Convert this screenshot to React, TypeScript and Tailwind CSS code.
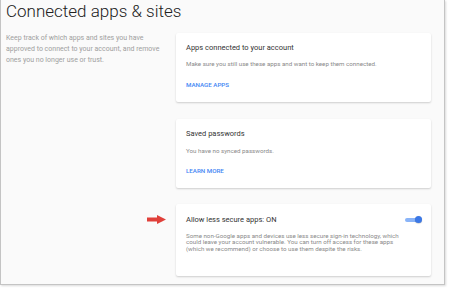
function Card({ children, className = '' }: { children: React.ReactNode; className?: string }) {
    return (
        <div className={`bg-white rounded-[2px] shadow-[0_1px_2px_rgba(0,0,0,0.18)] ${className}`}>
            {children}
        </div>
    )
}

function Arrow() {
    return (
        <svg width="19" height="9" viewBox="0 0 19 9" className="absolute left-[-29px] top-[11px]">
            <path d="M0 2.5 H10 V0 L19 4.5 L10 9 V6.5 H0 Z" fill="#e0403a" />
        </svg>
    )
}

export default function App() {
    return (
        <div className="w-[450px] h-[290px] bg-white overflow-hidden" style={{ fontFamily: 'Roboto, "Liberation Sans", sans-serif' }}>
            <div className="w-[445px] h-[285px] bg-[#fafafa] border-l border-r border-b border-[#c4c4c4] shadow-[1px_1px_2px_rgba(0,0,0,0.15)]">
                <h1 className="pl-[5px] pt-[1px] text-[17px] leading-[20px] font-light text-[#212121]">
                    Connected apps &amp; sites
                </h1>
                <div className="flex">
                    <div className="w-[175px] pl-[5px] pt-[12px] pr-[12px]">
                        <p className="text-[7px] leading-[11px] text-[#a0a0a0]">
                            Keep track of which apps and sites you have approved to connect to your account, and remove ones you no longer use or trust.
                        </p>
                    </div>
                    <div className="w-[255px] flex flex-col gap-[17px] pt-[12px]">
                        <Card className="h-[69px] px-[10px] pt-[10px]">
                            <h3 className="text-[7.5px] leading-[9px] text-[#333]">Apps connected to your account</h3>
                            <p className="mt-[8px] text-[6.2px] leading-[9px] text-[#8a8a8a]">Make sure you still use these apps and want to keep them connected.</p>
                            <a className="block mt-[12px] text-[6.2px] leading-[9px] font-medium text-[#4285f4]">MANAGE APPS</a>
                        </Card>
                        <Card className="h-[69px] px-[10px] pt-[10px]">
                            <h3 className="text-[7.5px] leading-[9px] text-[#333]">Saved passwords</h3>
                            <p className="mt-[9px] text-[6.2px] leading-[9px] text-[#8a8a8a]">You have no synced passwords.</p>
                            <a className="block mt-[11px] text-[6.2px] leading-[9px] font-medium text-[#4285f4]">LEARN MORE</a>
                        </Card>
                        <Card className="relative h-[72px] px-[10px] pt-[11px] -mt-[1px]">
                            <Arrow />
                            <div className="flex items-center justify-between">
                                <h3 className="text-[7.5px] leading-[9px] text-[#333]">Allow less secure apps: ON</h3>
                                <div className="relative w-[17px] h-[8px] -mr-[1px] flex items-center">
                                    <div className="w-[13px] h-[4px] rounded-full bg-[#8ab4f8]" />
                                    <div className="absolute right-0 top-[0.5px] w-[7px] h-[7px] rounded-full bg-[#3b78e7] shadow-[0_0.5px_1px_rgba(0,0,0,0.3)]" />
                                </div>
                            </div>
                            <p className="mt-[9px] pr-[18px] text-[6.2px] leading-[6.3px] text-[#8a8a8a]">
                                Some non-Google apps and devices use less secure sign-in technology, which could leave your account vulnerable. You can turn off access for these apps (which we recommend) or choose to use them despite the risks.
                            </p>
                        </Card>
                    </div>
                </div>
            </div>
        </div>
    )
}
